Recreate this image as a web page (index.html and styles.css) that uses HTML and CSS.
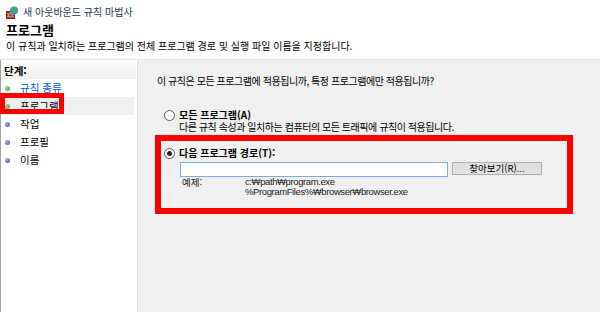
FILE: index.html
```html
<!DOCTYPE html>
<html lang="ko">
<head>
<meta charset="utf-8">
<link rel="stylesheet" href="styles.css">
</head>
<body>
<div class="window">
  <div class="header">
    <div class="titlebar">
      <svg class="appicon" width="13" height="13" viewBox="0 0 13 13">
        <rect x="0.5" y="5.5" width="8" height="7" fill="#a0432b" stroke="#6e2a18" stroke-width="1"/>
        <line x1="1" y1="8" x2="8" y2="8" stroke="#e0a080" stroke-width="0.8"/>
        <line x1="1" y1="10.5" x2="8" y2="10.5" stroke="#e0a080" stroke-width="0.8"/>
        <line x1="4.5" y1="6" x2="4.5" y2="8" stroke="#e0a080" stroke-width="0.8"/>
        <line x1="2.5" y1="8" x2="2.5" y2="10.5" stroke="#e0a080" stroke-width="0.8"/>
        <line x1="6.5" y1="8" x2="6.5" y2="10.5" stroke="#e0a080" stroke-width="0.8"/>
        <circle cx="8" cy="4.5" r="4" fill="#3d8fd8"/>
        <path d="M6 2.2 C7.5 1.8 8.5 3 7.6 4.2 C6.8 5 7.8 6.2 9 6.5 C10.5 6.8 11.5 5.5 11.8 4.5 C11.5 2.5 10 1 8 0.8 Z" fill="#4caf3c"/>
      </svg>
      <span class="title">새 아웃바운드 규칙 마법사</span>
    </div>
    <h1 class="page-title">프로그램</h1>
    <p class="subtitle">이 규칙과 일치하는 프로그램의 전체 프로그램 경로 및 실행 파일 이름을 지정합니다.</p>
  </div>
  <div class="main">
    <div class="sidebar">
      <div class="steps-head">단계:</div>
      <ul class="steps">
        <li class="step done link"><span class="dot green"></span>규칙 종류</li>
        <li class="step current"><span class="dot green"></span>프로그램</li>
        <li class="step"><span class="dot blue"></span>작업</li>
        <li class="step"><span class="dot blue"></span>프로필</li>
        <li class="step"><span class="dot blue"></span>이름</li>
      </ul>
      <div class="mark mark-side"></div>
    </div>
    <div class="content">
      <p class="question">이 규칙은 모든 프로그램에 적용됩니까, 특정 프로그램에만 적용됩니까?</p>
      <div class="option opt-all">
        <div class="opt-row"><span class="radio"></span><span class="opt-label">모든 프로그램(A)</span></div>
        <div class="opt-desc">다른 규칙 속성과 일치하는 컴퓨터의 모든 트래픽에 규칙이 적용됩니다.</div>
      </div>
      <div class="option opt-path">
        <div class="opt-row"><span class="radio checked"></span><span class="opt-label">다음 프로그램 경로(T):</span></div>
        <div class="path-row">
          <div class="path-input"></div>
          <div class="browse">찾아보기(R)...</div>
        </div>
        <div class="example">
          <span class="ex-label">예제:</span>
          <div class="ex-values">
            <div class="ex-line">c:₩path₩program.exe</div>
            <div class="ex-line">%ProgramFiles%₩browser₩browser.exe</div>
          </div>
        </div>
      </div>
      <div class="mark mark-main"></div>
    </div>
  </div>
</div>
</body>
</html>
```

FILE: styles.css
```css
html, body {
  margin: 0;
  padding: 0;
}
body {
  width: 600px;
  height: 312px;
  overflow: hidden;
  background: #ffffff;
  font-family: "Noto Sans CJK KR", "Liberation Sans", sans-serif;
  font-size: 10px;
  color: #000;
}
.window {
  display: flex;
  flex-direction: column;
  height: 312px;
}
.header {
  height: 59px;
  border-bottom: 1px solid #e6e6e6;
  padding-left: 6px;
  box-sizing: content-box;
}
.titlebar {
  height: 24px;
  display: flex;
  align-items: center;
  gap: 4px;
}
.appicon {
  display: block;
}
.title {
  color: #1e395b;
  font-size: 10px;
  line-height: 14px;
}
.page-title {
  margin: 0;
  font-size: 13px;
  line-height: 12px;
  font-weight: bold;
  height: 13px;
}
.subtitle {
  margin: 2px 0 0 0;
  font-size: 10px;
  line-height: 14px;
}
.main {
  flex: 1;
  display: flex;
}
.sidebar {
  position: relative;
  width: 136px;
  border-left: 1px solid #a0a0a0;
  border-right: 1px solid #e2e2e2;
  background: #fff;
  padding-top: 2px;
}
.steps-head {
  height: 17px;
  line-height: 17px;
  padding-left: 3px;
  font-weight: bold;
  font-size: 10.5px;
  background: linear-gradient(#fbfbfb, #efefef);
  margin-right: 1px;
}
.steps {
  list-style: none;
  margin: 0;
  padding: 0;
}
.step {
  height: 18px;
  line-height: 18px;
  display: flex;
  align-items: center;
  padding-left: 4px;
  font-size: 10.5px;
  margin-right: 3px;
}
.step.link {
  color: #0066cc;
}
.step.current {
  background: #efefef;
}
.dot {
  width: 5px;
  height: 5px;
  border-radius: 50%;
  margin-right: 10px;
}
.dot.green {
  background: radial-gradient(circle at 35% 35%, #9be08a, #3c9c2c);
}
.dot.blue {
  background: radial-gradient(circle at 35% 35%, #a6a6f0, #4848b8);
}
.mark {
  position: absolute;
  border: 5px solid #ff0000;
  box-sizing: border-box;
}
.mark-side {
  left: -1px;
  top: 33px;
  width: 64px;
  height: 21px;
}
.content {
  position: relative;
  flex: 1;
  background: #f0f0f0;
  padding-left: 19px;
  letter-spacing: -0.45px;
}
.question {
  margin: 14px 0 0 0;
  line-height: 14px;
  font-size: 10px;
}
.option {
  padding-left: 7px;
}
.opt-all {
  margin-top: 21px;
}
.opt-row {
  display: flex;
  align-items: center;
  height: 12px;
}
.radio {
  width: 9px;
  height: 9px;
  border: 1px solid #555;
  border-radius: 50%;
  background: #fff;
  margin-right: 4px;
  box-sizing: content-box;
  position: relative;
  flex: none;
}
.radio.checked::after {
  content: "";
  position: absolute;
  left: 2px;
  top: 2px;
  width: 5px;
  height: 5px;
  border-radius: 50%;
  background: #222;
}
.opt-label {
  font-weight: bold;
  font-size: 10px;
  line-height: 12px;
  letter-spacing: 0;
}
.opt-desc {
  padding-left: 15px;
  height: 12px;
  line-height: 12px;
  font-size: 10px;
}
.opt-path {
  margin-top: 14px;
}
.path-row {
  display: flex;
  gap: 4px;
  margin-left: 16px;
  margin-top: 3px;
  letter-spacing: 0;
}
.path-input {
  width: 266px;
  height: 13px;
  border: 1px solid #7aaee0;
  background: #fff;
}
.browse {
  width: 88px;
  height: 11px;
  border: 1px solid #adadad;
  background: #e1e1e1;
  font-size: 9.5px;
  line-height: 11px;
  text-align: center;
}
.example {
  display: flex;
  margin-left: 18px;
  font-size: 9.5px;
  line-height: 10px;
  color: #222;
}
.ex-label {
  width: 63px;
  height: 10px;
  line-height: 10px;
  letter-spacing: 0;
}
.ex-values {
  font-family: "Liberation Sans", "Noto Sans CJK KR", sans-serif;
  letter-spacing: -0.4px;
}
.ex-line {
  height: 10px;
  line-height: 10px;
  white-space: nowrap;
}
.mark-main {
  left: 17px;
  top: 75px;
  width: 418px;
  height: 79px;
  border-width: 6px;
}
```
